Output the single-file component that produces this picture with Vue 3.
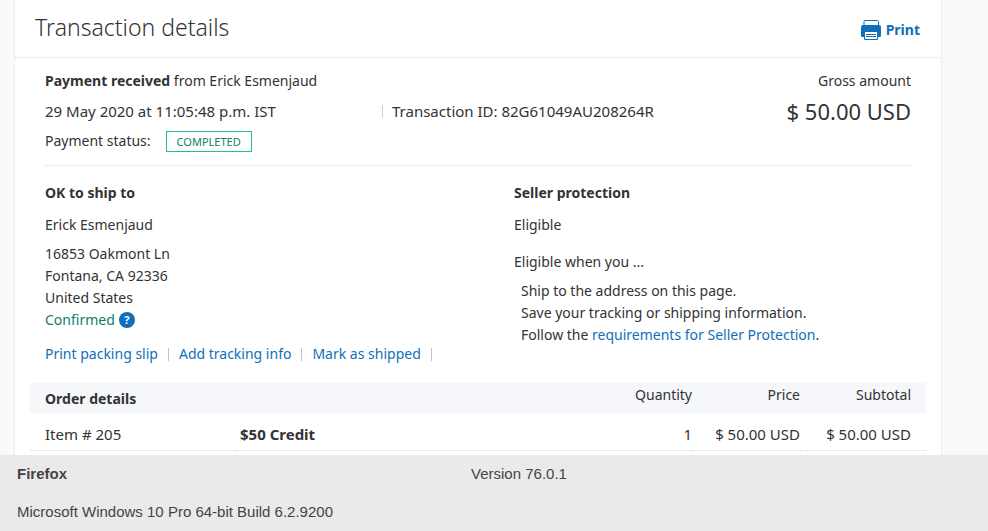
<script setup>
const address = ['16853 Oakmont Ln', 'Fontana, CA 92336', 'United States']
const actions = ['Print packing slip', 'Add tracking info', 'Mark as shipped']
const items = [
  { id: 'Item # 205', name: '$50 Credit', quantity: 1, price: '$ 50.00 USD', subtotal: '$ 50.00 USD' },
]
</script>

<template>
  <div class="page">
    <main class="card">
      <header class="card-header">
        <h1>Transaction details</h1>
        <button type="button" class="print">
          <svg width="20" height="20" viewBox="0 0 20 20" aria-hidden="true">
            <path d="M3 6V1.500a1 1 0 0 1 1-1h12.500a1 1 0 0 1 1 1V6" fill="none" stroke="#0f70b7" />
            <path d="M2 5h16a2 2 0 0 1 2 2v8.500a1.500 1.500 0 0 1-1.500 1.500H17v2a1 1 0 0 1-1 1H4a1 1 0 0 1-1-1v-2H1.500A1.500 1.500 0 0 1 0 15.500V7a2 2 0 0 1 2-2z" fill="#0f70b7" />
            <path d="M4 12h12v7H4z" fill="#fff" />
            <path d="M5 14.500h10M5 16.500h10" stroke="#0f70b7" />
          </svg>
          <span>Print</span>
        </button>
      </header>

      <section class="summary">
        <div class="facts">
          <p><strong>Payment received</strong> from Erick Esmenjaud</p>
          <p class="meta">
            <span class="date">29 May 2020 at 11:05:48 p.m. IST</span>
            <span class="transaction">Transaction ID: 82G61049AU208264R</span>
          </p>
          <p class="status">Payment status: <span class="badge">COMPLETED</span></p>
        </div>
        <div class="gross">
          <p>Gross amount</p>
          <p class="amount">$ 50.00 USD</p>
        </div>
      </section>

      <section class="columns">
        <div>
          <h2>OK to ship to</h2>
          <p class="lead">Erick Esmenjaud</p>
          <address>
            <span v-for="line in address" :key="line">{{ line }}</span>
            <span class="confirmed">
              Confirmed
              <button type="button" class="help" aria-label="Help">
                <span>?</span>
              </button>
            </span>
          </address>
          <ul class="actions">
            <li v-for="action in actions" :key="action"><a href="#">{{ action }}</a></li>
          </ul>
        </div>
        <div>
          <h2>Seller protection</h2>
          <p class="lead">Eligible</p>
          <p class="when">Eligible when you ...</p>
          <ul class="terms">
            <li>Ship to the address on this page.</li>
            <li>Save your tracking or shipping information.</li>
            <li>Follow the <a href="#">requirements for Seller Protection</a>.</li>
          </ul>
        </div>
      </section>

      <table class="order">
        <colgroup>
          <col class="col-id" />
          <col class="col-name" />
          <col class="col-price" />
          <col class="col-subtotal" />
        </colgroup>
        <thead>
          <tr>
            <th class="title" scope="col">Order details</th>
            <th class="num" scope="col">Quantity</th>
            <th class="num" scope="col">Price</th>
            <th class="num last" scope="col">Subtotal</th>
          </tr>
        </thead>
        <tbody>
          <tr v-for="item in items" :key="item.id">
            <td class="first">{{ item.id }}</td>
            <td><div class="product"><strong>{{ item.name }}</strong><span>{{ item.quantity }}</span></div></td>
            <td class="num">{{ item.price }}</td>
            <td class="num last">{{ item.subtotal }}</td>
          </tr>
        </tbody>
      </table>
    </main>

    <footer class="system">
      <strong>Firefox</strong>
      <span>Version 76.0.1</span>
      <span class="os">Microsoft Windows 10 Pro 64-bit Build 6.2.9200</span>
    </footer>
  </div>
</template>

<style>
body {
  margin: 0;
  background: #fafafa;
}
</style>

<style scoped>
.page {
  display: flex;
  flex-direction: column;
  min-height: 100vh;
  color: #333;
  font: 14px/22px "Noto Sans", sans-serif;
}
h1, h2, p, ul {
  margin: 0;
  padding: 0;
  list-style: none;
}
a {
  color: #0f70b7;
  text-decoration: none;
}
button {
  border: 0;
  padding: 0;
  background: none;
  font: inherit;
  cursor: pointer;
}
.card {
  margin: 0 46px 0 14px;
  padding-bottom: 4px;
  border: 1px dotted #ddd;
  border-width: 0 1px;
  background: #fff;
}
.card-header {
  display: flex;
  align-items: center;
  justify-content: space-between;
  height: 57px;
  padding: 0 21px 0 20px;
  border-bottom: 1px dotted #ddd;
}
h1 {
  font-size: 23px;
  font-weight: 300;
  line-height: 54px;
  padding-bottom: 3px;
}
.print {
  display: flex;
  align-items: center;
  gap: 5px;
  padding-top: 3px;
  color: #0f70b7;
  font-weight: 700;
}
.summary {
  display: flex;
  justify-content: space-between;
  margin: 0 30px;
  padding: 8px 0 9px;
  border-bottom: 1px dotted #ddd;
  line-height: 30px;
}
.facts {
  flex: 1;
}
.meta {
  display: flex;
  font-size: 15px;
}
.date {
  flex: 0 0 337px;
}
.transaction {
  display: flex;
  align-items: center;
}
.transaction::before {
  content: "";
  height: 13px;
  margin-right: 9px;
  border-left: 1px solid #ccc;
}
.status {
  display: flex;
  align-items: center;
  gap: 15px;
}
.badge {
  padding: 0 10px;
  border: 1px solid #1fc08c;
  color: #0f8067;
  font-size: 11px;
  line-height: 19px;
}
.gross {
  text-align: right;
}
.amount {
  font-size: 22px;
}
.columns {
  display: grid;
  grid-template-columns: 469px 1fr;
  padding: 16px 30px 0;
}
h2 {
  font-size: 14px;
  line-height: 22px;
}
.lead {
  margin-top: 10px;
}
address {
  display: flex;
  flex-direction: column;
  margin-top: 7px;
  font-style: normal;
}
.confirmed {
  display: flex;
  align-items: center;
  gap: 4px;
  color: #0f8067;
}
.help {
  display: flex;
  align-items: center;
  justify-content: center;
  width: 16px;
  height: 16px;
  border-radius: 50%;
  background: #0f70b7;
  color: #fff;
  font-size: 11px;
  font-weight: 700;
  line-height: 16px;
}
.actions {
  display: flex;
  margin-top: 12px;
}
.actions li {
  display: flex;
  align-items: center;
}
.actions li::after {
  content: "";
  height: 13px;
  margin: 0 10px;
  border-left: 1px solid #bcc6d2;
}
.when {
  margin-top: 15px;
}
.terms {
  margin-top: 7px;
  padding-left: 7px;
}
.order {
  width: calc(100% - 30px);
  margin: 18px 15px 0;
  border-collapse: separate;
  border-spacing: 0;
  table-layout: fixed;
}
.col-id {
  width: 206px;
}
.col-price {
  width: 108px;
}
.col-subtotal {
  width: 126px;
}
th {
  height: 30px;
  padding: 0;
  background: #f5f7fb;
  font-weight: 400;
  line-height: 22px;
  text-align: left;
  vertical-align: top;
}
th.title {
  padding: 5px 0 0 15px;
  font-weight: 700;
  box-sizing: border-box;
}
.num {
  text-align: right;
}
th.num {
  padding-top: 1px;
  box-sizing: border-box;
}
td {
  padding: 10px 0 5px;
  border-bottom: 1px dotted #ddd;
  font-size: 15px;
}
td.first {
  padding-left: 15px;
}
.last {
  padding-right: 15px;
}
.product {
  display: flex;
  justify-content: space-between;
  padding-left: 4px;
}
.system {
  flex: 1;
  display: grid;
  grid-template-columns: 454px 1fr;
  align-content: start;
  row-gap: 16px;
  padding: 8px 17px 7px;
  background: #eaeaea;
  color: #444;
  font: 15px/22px "Liberation Sans", Arial, sans-serif;
}
.os {
  grid-column: 1 / -1;
}
</style>
